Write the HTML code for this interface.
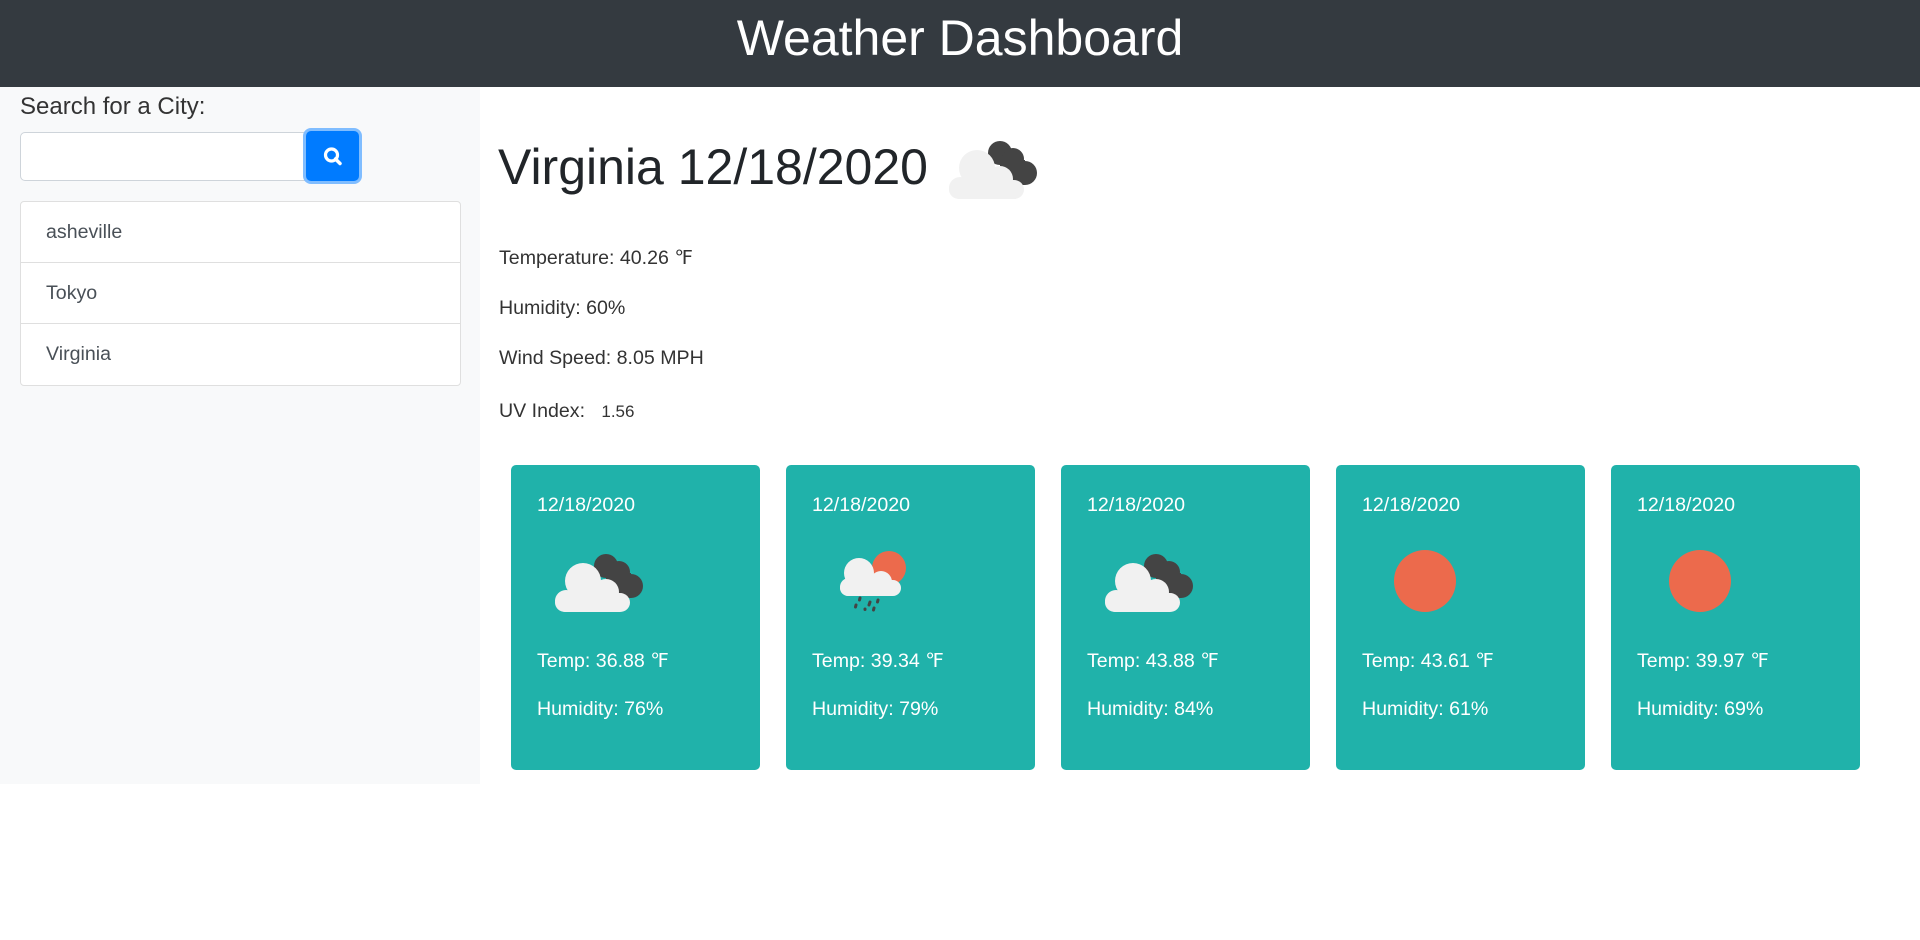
<!DOCTYPE html>
<html><head><meta charset="utf-8">
<style>
*{box-sizing:border-box;margin:0;padding:0}
body{width:1920px;height:940px;background:#fff;font-family:"Liberation Sans",sans-serif;color:#212529;position:relative;overflow:hidden}
.hdr{position:absolute;left:0;top:0;width:1920px;height:87px;background:#343a40;color:#fff;text-align:center;font-size:50px;line-height:76px}
.side{position:absolute;left:0;top:87px;width:480px;height:697px;background:#f8f9fa}
.lbl{position:absolute;left:20px;top:93px;font-size:24px;color:#333}
.inp{position:absolute;left:20px;top:132px;width:287px;height:49px;background:#fff;border:1px solid #ced4da;border-radius:5px 0 0 5px}
.btn{position:absolute;left:306px;top:131px;width:53px;height:50px;background:#007bff;border-radius:5px;box-shadow:0 0 0 3px #80bdff}
.list{position:absolute;left:20px;top:201px;width:441px;background:#fff;border:1px solid #dfdfdf;border-radius:4px}
.list div{height:61px;line-height:61px;padding-left:25px;font-size:19.6px;color:#495057;border-bottom:1px solid #dfdfdf}
.list div:last-child{border-bottom:none}
.title{position:absolute;left:498px;top:138px;font-size:50px;color:#212529}
.p{position:absolute;left:499px;font-size:19.6px;color:#333}
.card{position:absolute;top:465px;width:249px;height:305px;background:#20b2aa;border-radius:5px;color:#fff;font-size:19.6px}
.card .d{position:absolute;left:26px;top:29px}
.card svg{position:absolute;left:40px;top:78px}
</style></head><body>
<svg width="0" height="0" style="position:absolute"><defs>
<g id="cl"><g fill="#444"><circle cx="55" cy="23" r="12"/><circle cx="68" cy="29" r="11"/><circle cx="80" cy="43" r="12"/><rect x="55" y="30" width="25" height="25"/></g><g fill="#f1f1f1"><circle cx="32" cy="38" r="18"/><circle cx="55" cy="49" r="13"/><circle cx="15" cy="58" r="11"/><rect x="4" y="50" width="75" height="19" rx="10"/></g></g>
</defs></svg>
<div class="hdr">Weather Dashboard</div>
<div class="side"></div>
<div class="lbl">Search for a City:</div>
<div class="inp"></div>
<div class="btn"><svg width="53" height="50" viewBox="0 0 53 50"><circle cx="25.5" cy="24" r="6" fill="none" stroke="#fff" stroke-width="3.2"/><line x1="29.5" y1="28" x2="34" y2="32.5" stroke="#fff" stroke-width="3.5" stroke-linecap="round"/></svg></div>
<div class="list"><div>asheville</div><div>Tokyo</div><div>Virginia</div></div>
<div class="title">Virginia 12/18/2020</div>
<svg style="position:absolute;left:945px;top:130px" width="96" height="70" viewBox="0 0 96 70"><use href="#cl"/></svg>
<div class="p" style="top:246px">Temperature: 40.26 <span style="font-family:'Liberation Serif',serif">℉</span></div>
<div class="p" style="top:297px">Humidity: 60%</div>
<div class="p" style="top:347px">Wind Speed: 8.05 MPH</div>
<div class="p" style="top:400px">UV Index: &nbsp;&nbsp;<span style="font-size:17px">1.56</span></div>

<div class="card" style="left:511px"><div class="d">12/18/2020</div>
<svg width="96" height="70" viewBox="0 0 96 70"><use href="#cl"/></svg>
<div class="d" style="top:184px">Temp: 36.88 <span style="font-family:'Liberation Serif',serif">℉</span></div><div class="d" style="top:233px">Humidity: 76%</div></div>

<div class="card" style="left:786px"><div class="d">12/18/2020</div>
<svg width="96" height="70" viewBox="0 0 96 70"><circle cx="63" cy="25" r="17" fill="#ec6a4c"/><g fill="#f1f1f1"><circle cx="33" cy="30" r="15"/><circle cx="55" cy="39" r="11"/><circle cx="23" cy="44" r="9"/><rect x="14" y="37" width="61" height="16" rx="8"/></g><g stroke="#444" stroke-width="3" stroke-linecap="round"><line x1="34" y1="55" x2="33.5" y2="57"/><line x1="44" y1="59" x2="43" y2="62"/><line x1="52" y1="57" x2="51.5" y2="59"/><line x1="30" y1="62" x2="29.5" y2="64"/><line x1="39" y1="66" x2="39" y2="66.5"/><line x1="48" y1="65" x2="47.5" y2="67"/></g></svg>
<div class="d" style="top:184px">Temp: 39.34 <span style="font-family:'Liberation Serif',serif">℉</span></div><div class="d" style="top:233px">Humidity: 79%</div></div>

<div class="card" style="left:1061px"><div class="d">12/18/2020</div>
<svg width="96" height="70" viewBox="0 0 96 70"><use href="#cl"/></svg>
<div class="d" style="top:184px">Temp: 43.88 <span style="font-family:'Liberation Serif',serif">℉</span></div><div class="d" style="top:233px">Humidity: 84%</div></div>

<div class="card" style="left:1336px"><div class="d">12/18/2020</div>
<svg width="96" height="70" viewBox="0 0 96 70"><circle cx="49" cy="38" r="31" fill="#ec6a4c"/></svg>
<div class="d" style="top:184px">Temp: 43.61 <span style="font-family:'Liberation Serif',serif">℉</span></div><div class="d" style="top:233px">Humidity: 61%</div></div>

<div class="card" style="left:1611px"><div class="d">12/18/2020</div>
<svg width="96" height="70" viewBox="0 0 96 70"><circle cx="49" cy="38" r="31" fill="#ec6a4c"/></svg>
<div class="d" style="top:184px">Temp: 39.97 <span style="font-family:'Liberation Serif',serif">℉</span></div><div class="d" style="top:233px">Humidity: 69%</div></div>
</body></html>
